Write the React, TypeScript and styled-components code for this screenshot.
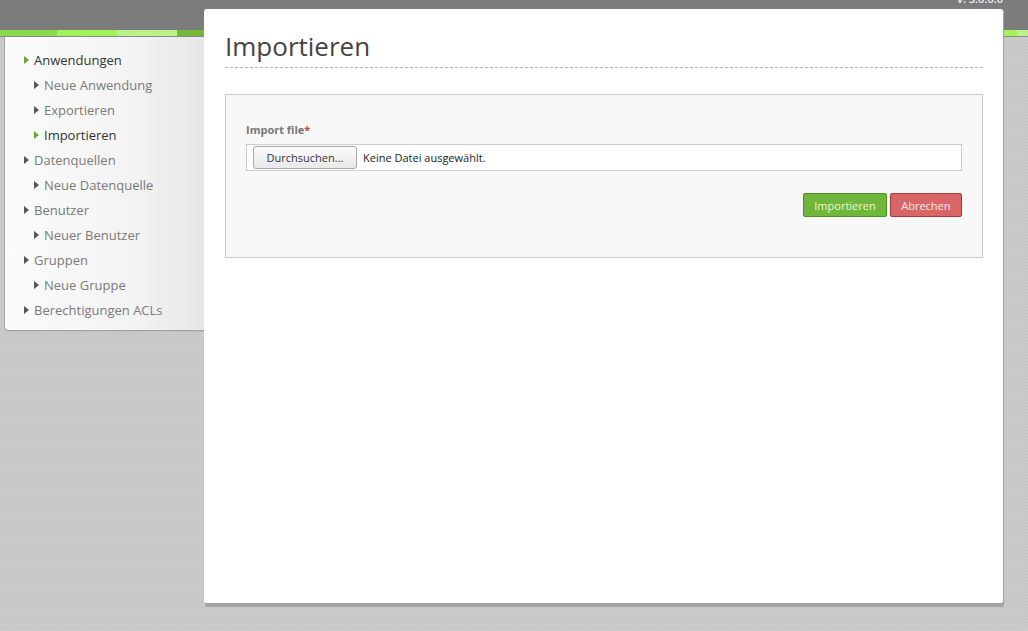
import React from "react";
import styled, { createGlobalStyle } from "styled-components";

const Global = createGlobalStyle`
  html, body { margin: 0; padding: 0; }
  body {
    background-color: #c9c9c9;
    background-image: radial-gradient(rgba(0,0,0,0.03) 1px, transparent 1px);
    background-size: 3px 3px;
    font-family: "Open Sans", "Noto Sans", sans-serif;
    height: 631px;
    overflow: hidden;
  }
`;

const Page = styled.div`
  width: 1028px;
  height: 631px;
`;

const Header = styled.header`
  height: 30px;
  background: #7c7c7c;
  display: flex;
  justify-content: flex-end;
  align-items: flex-start;
  padding-right: 25px;
  overflow: hidden;
`;

const Version = styled.span`
  color: #eeeeee;
  font-size: 11px;
  font-weight: 600;
  line-height: 12px;
  margin-top: -7px;
`;

const Stripe = styled.div`
  height: 6px;
  border-bottom: 1px solid #8a8a8a;
  background: linear-gradient(
    to right,
    #8ad84c 0, #8ad84c 57px,
    #a4f25a 57px, #a4f25a 117px,
    #b9f18c 117px, #b9f18c 177px,
    #74b83a 177px, #74b83a 957px,
    #a4f25a 957px, #a4f25a 1017px,
    #b9f18c 1017px
  );
`;

const Body = styled.div`
  display: flex;
  align-items: flex-start;
  padding-left: 4px;
`;

const Sidebar = styled.nav`
  width: 215px;
  flex-shrink: 0;
  margin-right: -15px;
  height: 294px;
  box-sizing: border-box;
  padding-top: 10px;
  background: linear-gradient(to right, #fbfbfb 0%, #f3f3f3 60%, #e4e4e4 100%);
  border-left: 1px solid #a5a5a5;
  border-bottom: 1px solid #a5a5a5;
  border-bottom-left-radius: 5px;
  box-shadow: 0 1px 0 #bdbdbd;
`;

const NavItem = styled.div<{ $level: number; $active?: boolean }>`
  display: flex;
  align-items: center;
  height: 25px;
  padding-left: ${(p) => (p.$level === 0 ? 19 : 29)}px;
  font-size: 13px;
  color: ${(p) => (p.$active ? "#333333" : "#7a7a7a")};
  white-space: nowrap;
`;

const Arrow = styled.span<{ $active?: boolean }>`
  width: 0;
  height: 0;
  border-top: 4px solid transparent;
  border-bottom: 4px solid transparent;
  border-left: 5px solid ${(p) => (p.$active ? "#6aa52f" : "#555555")};
  margin-right: 5px;
  margin-top: 1px;
`;

const Panel = styled.main`
  position: relative;
  width: 799px;
  height: 594px;
  margin-top: -28px;
  box-sizing: border-box;
  background: #ffffff;
  border-radius: 3px 3px 2px 2px;
  box-shadow: 1px 4px 0 #a2a2a2, 1px 0 0 #b0b0b0;
  padding: 0 20px 0 21px;
`;

const Title = styled.h1`
  margin: 0;
  padding-top: 19px;
  height: 39px;
  font-size: 26px;
  font-weight: 400;
  line-height: 36px;
  color: #444444;
  border-bottom: 1px dashed #b8b8b8;
`;

const FormBox = styled.form`
  margin-top: 26px;
  height: 164px;
  box-sizing: border-box;
  background: #f8f8f8;
  border: 1px solid #cccccc;
  padding: 27px 20px 0 20px;
`;

const Label = styled.label`
  display: block;
  font-size: 11px;
  font-weight: 700;
  color: #777777;
  line-height: 16px;
  margin-bottom: 6px;
`;

const Required = styled.span`
  color: #b94a48;
`;

const FileField = styled.div`
  display: flex;
  align-items: center;
  height: 27px;
  box-sizing: border-box;
  background: #ffffff;
  border: 1px solid #cccccc;
  padding-left: 6px;
`;

const BrowseButton = styled.span`
  display: inline-flex;
  align-items: center;
  justify-content: center;
  width: 104px;
  height: 23px;
  box-sizing: border-box;
  border: 1px solid #a9a9a9;
  border-radius: 3px;
  background: linear-gradient(#fbfbfb, #e9e9e9);
  font-size: 11px;
  color: #333333;
  margin-right: 6px;
`;

const NoFile = styled.span`
  font-size: 11px;
  color: #222222;
`;

const Actions = styled.div`
  display: flex;
  justify-content: flex-end;
  gap: 3px;
  margin-top: 22px;
`;

const Button = styled.button<{ $variant: "ok" | "cancel" }>`
  height: 24px;
  box-sizing: border-box;
  padding: 0 ${(p) => (p.$variant === "ok" ? 10 : 10.5)}px;
  font-family: "Open Sans", "Noto Sans", sans-serif;
  font-size: 11px;
  border-radius: 2px;
  cursor: pointer;
  color: ${(p) => (p.$variant === "ok" ? "#eef9d2" : "#fde6e6")};
  background: ${(p) => (p.$variant === "ok" ? "#70b63c" : "#d86667")};
  border: 1px solid ${(p) => (p.$variant === "ok" ? "#4f9124" : "#a93a3b")};
`;

const nav: { label: string; level: number; active?: boolean }[] = [
  { label: "Anwendungen", level: 0, active: true },
  { label: "Neue Anwendung", level: 1 },
  { label: "Exportieren", level: 1 },
  { label: "Importieren", level: 1, active: true },
  { label: "Datenquellen", level: 0 },
  { label: "Neue Datenquelle", level: 1 },
  { label: "Benutzer", level: 0 },
  { label: "Neuer Benutzer", level: 1 },
  { label: "Gruppen", level: 0 },
  { label: "Neue Gruppe", level: 1 },
  { label: "Berechtigungen ACLs", level: 0 },
];

export default function App() {
  return (
    <Page>
      <Global />
      <Header>
        <Version>v. 3.0.0.0</Version>
      </Header>
      <Stripe />
      <Body>
        <Sidebar>
          {nav.map((n) => (
            <NavItem key={n.label} $level={n.level} $active={n.active}>
              <Arrow $active={n.active} />
              {n.label}
            </NavItem>
          ))}
        </Sidebar>
        <Panel>
          <Title>Importieren</Title>
          <FormBox onSubmit={(e) => e.preventDefault()}>
            <Label>
              Import file<Required>*</Required>
            </Label>
            <FileField>
              <BrowseButton>Durchsuchen...</BrowseButton>
              <NoFile>Keine Datei ausgewählt.</NoFile>
            </FileField>
            <Actions>
              <Button $variant="ok" type="submit">Importieren</Button>
              <Button $variant="cancel" type="button">Abrechen</Button>
            </Actions>
          </FormBox>
        </Panel>
      </Body>
    </Page>
  );
}
